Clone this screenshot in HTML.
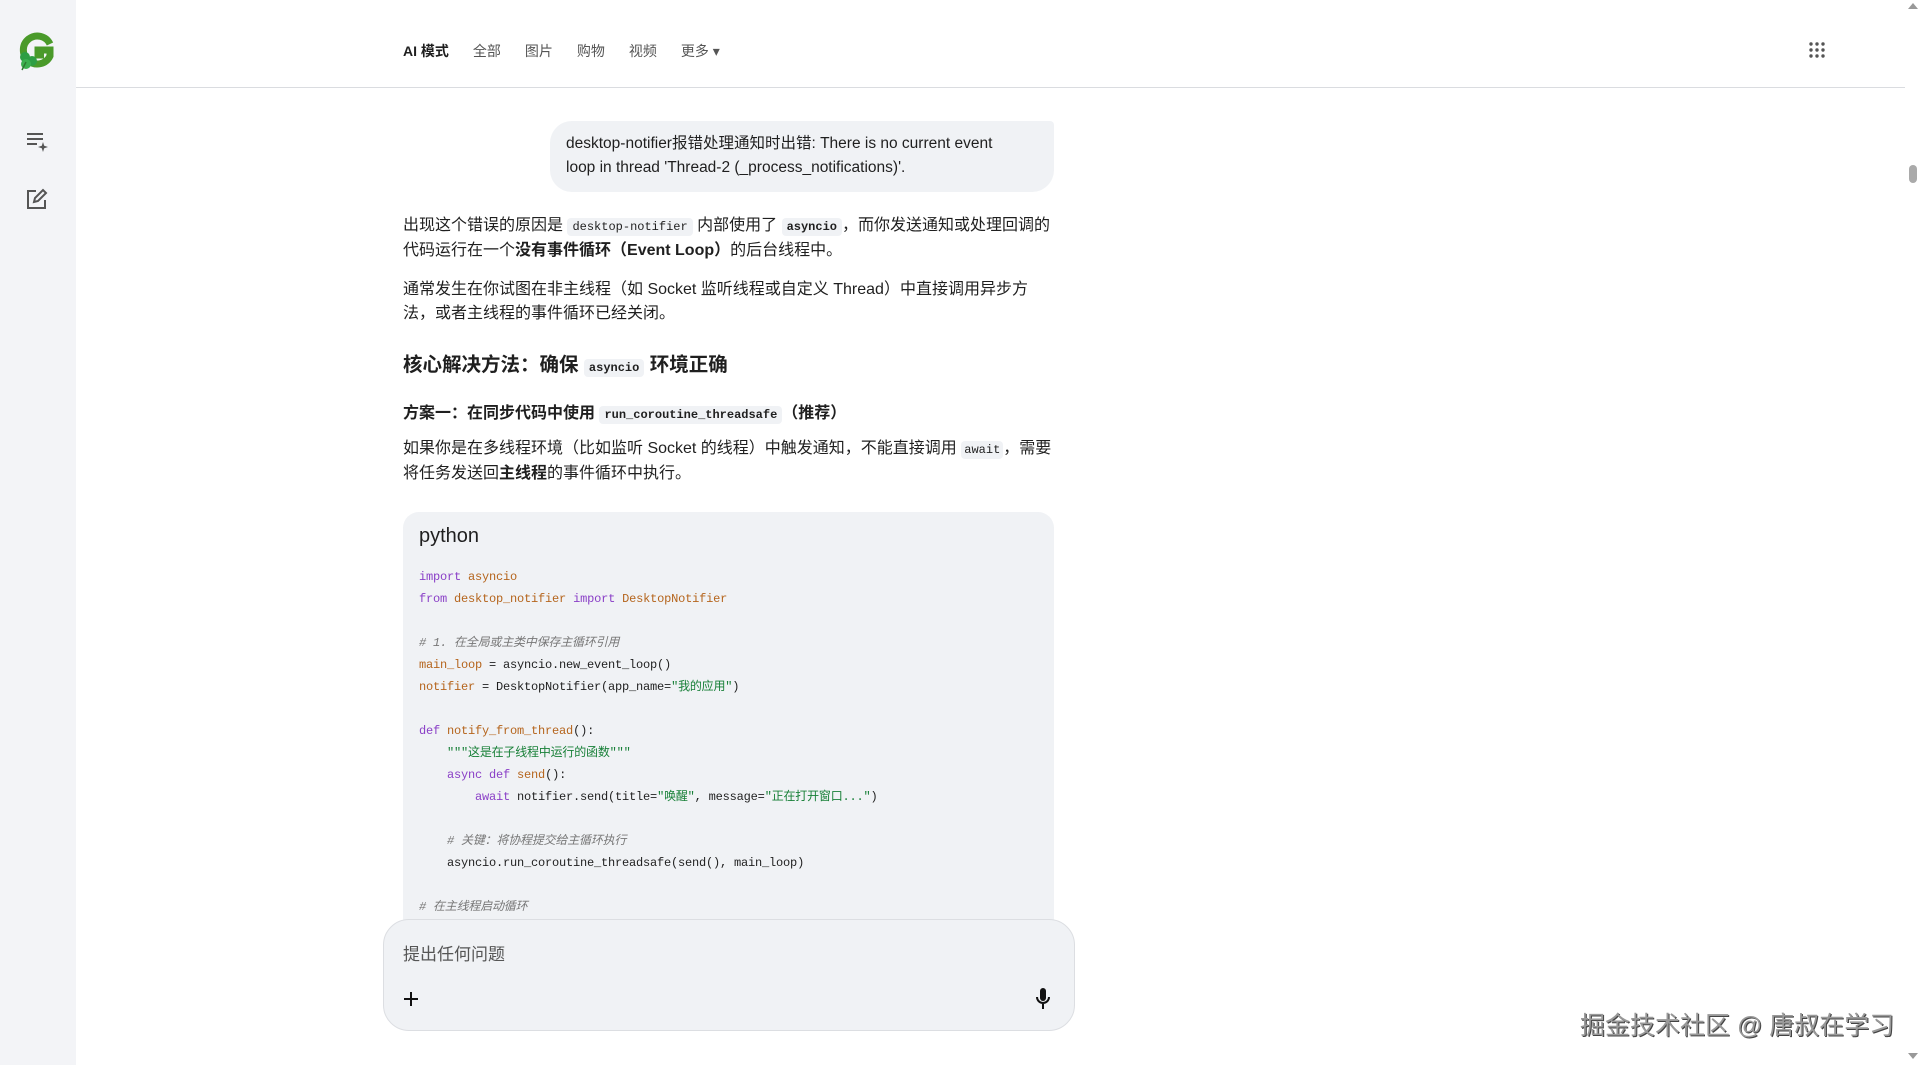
<!DOCTYPE html>
<html><head><meta charset="utf-8"><style>
*{margin:0;padding:0;box-sizing:border-box}
html,body{width:1920px;height:1065px;overflow:hidden;background:#fff;font-family:"Liberation Sans","Noto Sans CJK SC",sans-serif;color:#1f1f1f}
.side{position:absolute;left:0;top:0;width:76px;height:1065px;background:#f3f4f7}
.hdr{position:absolute;left:76px;top:0;width:1829px;height:88px;border-bottom:1px solid #dadce0;background:#fff}
.nav{position:absolute;left:403px;top:41px;font-size:14px;color:#555;white-space:nowrap}
.nav span{margin-right:24px}
.nav .on{color:#1f1f1f;font-weight:bold}
.c{position:absolute;left:403px;width:651px;font-size:16px;line-height:24px}
code{font-family:"Liberation Mono","Noto Sans CJK SC",monospace;font-size:12px;background:#f0f2f5;padding:2px 5px;border-radius:4px}
b code{font-weight:bold}
.bubble{position:absolute;left:550px;top:121px;width:504px;height:71px;background:#f0f2f5;border-radius:22px 4px 22px 22px;padding:11px 30px 11px 16px;font-size:15.5px;line-height:24px}
.codeb{position:absolute;left:403px;top:512px;width:651px;height:440px;background:#f0f2f5;border-radius:16px 16px 0 0}
.codeb .t{position:absolute;left:16px;top:13px;font-size:20px}
pre{position:absolute;left:16px;top:54px;font-family:"Liberation Mono","Noto Sans CJK SC",monospace;font-size:12px;line-height:22px;color:#1f1f1f;letter-spacing:-0.2px}
.k{color:#8a3fc7}.o{color:#b5651d}.s{color:#188038}.cm{color:#777;font-style:italic}
.inp{position:absolute;left:383px;top:919px;width:692px;height:112px;background:#f0f2f5;border:1px solid #dcdee2;border-radius:26px}
.wm{position:absolute;left:1580px;top:1006px;font-size:25px;color:#999;text-shadow:1px 1px 0 #444,-1px 0 0 #fff;white-space:nowrap}
.sb{position:absolute;right:0;top:0;width:15px;height:1065px;background:#fff}
</style></head><body>
<div class="side">
<svg style="position:absolute;left:14px;top:30px" width="42" height="42" viewBox="0 0 42 42">
<path d="M36 14 A14 14 0 1 0 36 26 L36 20 L24 20 L24 25 L30 25" fill="none" stroke="#4a9a2a" stroke-width="7"/>
<circle cx="11" cy="27" r="5" fill="#2e9e44"/><circle cx="18" cy="31" r="5" fill="#2e9e44"/><circle cx="12" cy="34" r="5" fill="#3bb04f"/>
<path d="M12 32 L8 40" stroke="#2e7a30" stroke-width="1.5"/>
</svg>
<svg style="position:absolute;left:26px;top:132px" width="24" height="20" viewBox="0 0 24 20"><path d="M1 2h16M1 7h16M1 12h10" stroke="#555" stroke-width="2"/><path d="M17 10l1.2 3.8 3.8 1.2-3.8 1.2L17 20l-1.2-3.8L12 15l3.8-1.2z" fill="#555"/></svg>
<svg style="position:absolute;left:26px;top:188px" width="22" height="22" viewBox="0 0 22 22"><path d="M10 3H2v17h17v-8" fill="none" stroke="#555" stroke-width="2"/><path d="M8 14l1-4 8-8 3 3-8 8z" fill="none" stroke="#555" stroke-width="2"/></svg>
</div>
<div class="hdr"></div>
<div class="nav"><span class="on">AI 模式</span><span>全部</span><span>图片</span><span>购物</span><span>视频</span><span>更多 ▾</span></div>
<svg style="position:absolute;left:1809px;top:42px" width="16" height="16" viewBox="0 0 16 16" fill="#555"><circle cx="2" cy="2" r="1.7"/><circle cx="8" cy="2" r="1.7"/><circle cx="14" cy="2" r="1.7"/><circle cx="2" cy="8" r="1.7"/><circle cx="8" cy="8" r="1.7"/><circle cx="14" cy="8" r="1.7"/><circle cx="2" cy="14" r="1.7"/><circle cx="8" cy="14" r="1.7"/><circle cx="14" cy="14" r="1.7"/></svg>
<div class="bubble">desktop-notifier报错处理通知时出错: There is no current event loop in thread 'Thread-2 (_process_notifications)'.</div>
<div class="c" style="top:214px">出现这个错误的原因是 <code>desktop-notifier</code> 内部使用了 <b><code>asyncio</code></b>，而你发送通知或处理回调的代码运行在一个<b>没有事件循环（Event Loop）</b>的后台线程中。</div>
<div class="c" style="top:278px">通常发生在你试图在非主线程（如 Socket 监听线程或自定义 Thread）中直接调用异步方法，或者主线程的事件循环已经关闭。</div>
<div class="c" style="top:351px;font-size:19.5px;font-weight:bold;line-height:28px">核心解决方法：确保 <code>asyncio</code> 环境正确</div>
<div class="c" style="top:402px;font-weight:bold">方案一：在同步代码中使用 <code>run_coroutine_threadsafe</code>（推荐）</div>
<div class="c" style="top:437px;width:656px">如果你是在多线程环境（比如监听 Socket 的线程）中触发通知，不能直接调用 <code style="padding:2px 3px">await</code>，需要将任务发送回<b>主线程</b>的事件循环中执行。</div>
<div class="codeb"><div class="t">python</div>
<pre><span class="k">import</span> <span class="o">asyncio</span>
<span class="k">from</span> <span class="o">desktop_notifier</span> <span class="k">import</span> <span class="o">DesktopNotifier</span>

<span class="cm"># 1. 在全局或主类中保存主循环引用</span>
<span class="o">main_loop</span> = asyncio.new_event_loop()
<span class="o">notifier</span> = DesktopNotifier(app_name=<span class="s">"我的应用"</span>)

<span class="k">def</span> <span class="o">notify_from_thread</span>():
    <span class="s">"""这是在子线程中运行的函数"""</span>
    <span class="k">async def</span> <span class="o">send</span>():
        <span class="k">await</span> notifier.send(title=<span class="s">"唤醒"</span>, message=<span class="s">"正在打开窗口..."</span>)

    <span class="cm"># 关键：将协程提交给主循环执行</span>
    asyncio.run_coroutine_threadsafe(send(), main_loop)

<span class="cm"># 在主线程启动循环</span></pre></div>
<div class="inp">
<div style="position:absolute;left:19px;top:20px;font-size:17px;color:#555">提出任何问题</div>
<svg style="position:absolute;left:20px;top:72px" width="14" height="14" viewBox="0 0 14 14"><path d="M7 0v14M0 7h14" stroke="#111" stroke-width="2"/></svg>
<svg style="position:absolute;left:652px;top:68px" width="14" height="22" viewBox="0 0 14 22"><rect x="4" y="0" width="6" height="13" rx="3" fill="#111"/><path d="M1 9a6 6 0 0 0 12 0M7 15v6" fill="none" stroke="#111" stroke-width="2"/></svg>
</div>
<div class="wm">掘金技术社区 @ 唐叔在学习</div>
<div class="sb"><div style="position:absolute;left:3px;top:3px;width:0;height:0;border-left:5px solid transparent;border-right:5px solid transparent;border-bottom:6px solid #999"></div><div style="position:absolute;left:4px;top:165px;width:8px;height:18px;background:#aaa;border-radius:4px"></div><div style="position:absolute;left:3px;top:1053px;width:0;height:0;border-left:5px solid transparent;border-right:5px solid transparent;border-top:6px solid #999"></div></div>
</body></html>
